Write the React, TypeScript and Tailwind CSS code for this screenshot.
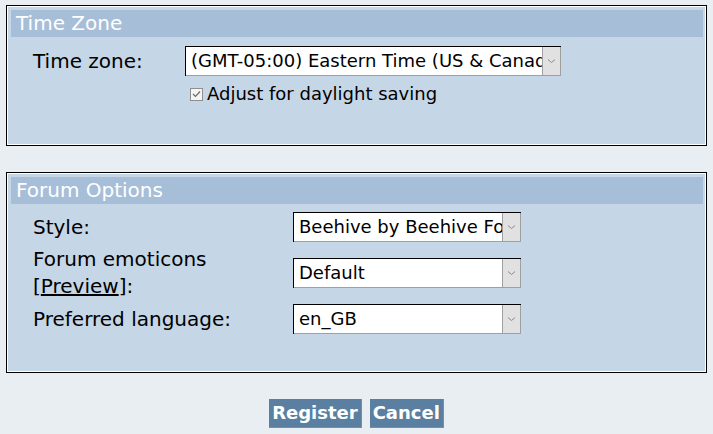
import React from 'react'

function FakeSelect({ value, width }: { value: string; width: string }) {
  return (
    <div className={`flex h-[30px] ${width} bg-white border-t border-l border-black text-[18px]`}>
      <div className="flex-1 overflow-hidden whitespace-nowrap pl-[5px] leading-[28px] border-b border-[#a0a0a0]">
        {value}
      </div>
      <div className="w-[19px] bg-[#e1e1e1] border border-[#a0a0a0] border-t-0 flex items-center justify-center">
        <svg width="9" height="6" viewBox="0 0 9 6">
          <path d="M1 1.5 L4.5 4.5 L8 1.5" fill="none" stroke="#8a8a8a" strokeWidth="1" />
        </svg>
      </div>
    </div>
  )
}

function Panel({ title, children }: { title: string; children: React.ReactNode }) {
  return (
    <div className="border border-black">
      <div className="border border-white bg-[#c5d6e6] pt-[3px] pl-[3px] pr-[2px] pb-[3px]">
        <div className="h-[27px] bg-[#a7bed8] text-white pl-[5px] leading-[27px] text-[20px]">{title}</div>
        {children}
      </div>
    </div>
  )
}

export default function App() {
  return (
    <div className="min-h-[434px] bg-[#e9eef2] text-[20px] text-black font-['DejaVu_Sans',_Verdana,_sans-serif] px-[6px] pt-[5px]">
      {/* Time zone */}
      <Panel title="Time Zone">
        <div className="h-[104px] pt-[9px]">
          <div className="flex items-center">
            <div className="w-[174px] pl-[22px]">Time zone:</div>
            <FakeSelect value="(GMT-05:00) Eastern Time (US & Canada)" width="w-[376px]" />
          </div>
          <label className="flex items-center mt-[6px] ml-[179px] leading-[24px] text-[18px]">
            <span className="w-[13px] h-[13px] border border-[#8f8f8f] bg-[#f4f4f4] flex items-center justify-center mr-[4px]">
              <svg width="9" height="8" viewBox="0 0 9 8">
                <path d="M1 4 L3.5 6.5 L8 1.5" fill="none" stroke="#6b6b6b" strokeWidth="1.2" />
              </svg>
            </span>
            Adjust for daylight saving
          </label>
        </div>
      </Panel>

      <div className="h-[26px]" />

      {/* Forum options */}
      <Panel title="Forum Options">
        <div className="h-[164px]">
          <div className="flex items-center h-[46px]">
            <div className="w-[282px] pl-[22px]">Style:</div>
            <FakeSelect value="Beehive by Beehive Forum" width="w-[228px]" />
          </div>
          <div className="flex items-center h-[46px]">
            <div className="w-[282px] pl-[22px] leading-[27px]">
              Forum emoticons
              <br />
              [<a href="#" className="underline">Preview</a>]:
            </div>
            <FakeSelect value="Default" width="w-[228px]" />
          </div>
          <div className="flex items-center h-[46px]">
            <div className="w-[282px] pl-[22px]">Preferred language:</div>
            <FakeSelect value="en_GB" width="w-[228px]" />
          </div>
        </div>
      </Panel>

      <div className="flex justify-center gap-[8px] mt-[26px]">
        <button className="h-[29px] px-[3px] bg-[#5a7fa0] text-white font-bold border-r border-b border-[#8a8a8a] leading-[28px] text-[18px]">
          Register
        </button>
        <button className="h-[29px] px-[3px] bg-[#5a7fa0] text-white font-bold border-r border-b border-[#8a8a8a] leading-[28px] text-[18px]">
          Cancel
        </button>
      </div>
    </div>
  )
}
